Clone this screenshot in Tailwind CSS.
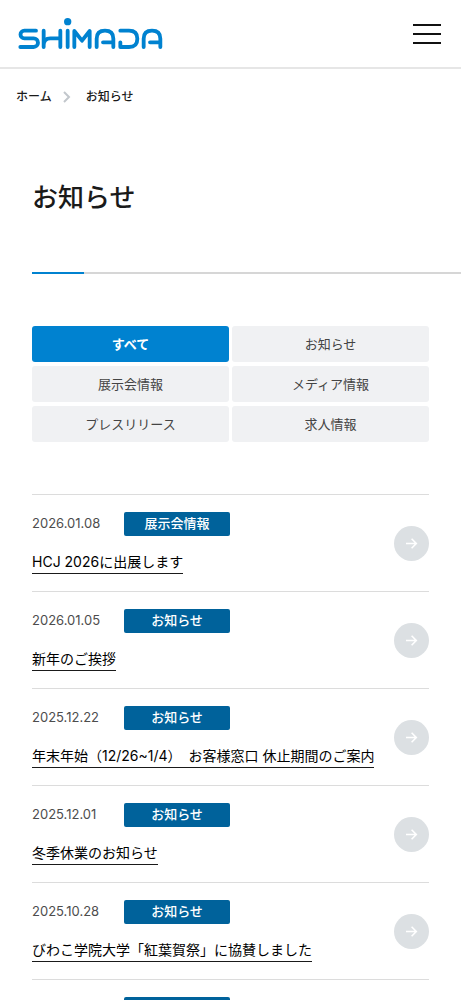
<!DOCTYPE html>
<html lang="ja">
<head>
<meta charset="utf-8">
<meta name="viewport" content="width=device-width, initial-scale=1">
<title>お知らせ | SHIMADA</title>
<script src="https://cdn.jsdelivr.net/npm/@tailwindcss/browser@4"></script>
</head>
<body class="bg-white font-['Inter','Noto_Sans_CJK_JP',sans-serif] font-medium text-[#1a1a1a] overflow-x-hidden">
<header class="flex h-[69px] items-center justify-between border-b-2 border-[#e6e6e6] pl-[18px] pr-5">
  <a href="#" aria-label="SHIMADA">
    <svg class="h-8 w-[145px]" viewBox="54 54 435 96" fill="none" stroke="#0082d0" stroke-width="11.5" stroke-linecap="round" stroke-linejoin="round">
      <path d="M108 92H73a11 11 0 0 0 0 23H101a13 13 0 0 1 0 26H61"/>
      <path d="M131 92V141M131 141V135Q131 115 151 115H181M181 92V141"/>
      <path d="M203 92V141"/><circle cx="203" cy="65" r="11" fill="#0082d0" stroke="none"/>
      <path d="M223 141V93L246 122L269 93V141"/>
      <path d="M290 141V116Q290 92 315 92Q340 92 340 116V141M309 127H340"/>
      <path d="M361 92H387Q412 92 412 116Q412 141 387 141H361V127"/>
      <path d="M431 141V116Q431 92 456 92Q481 92 481 116V141M450 127H481"/>
    </svg>
  </a>
  <button type="button" aria-label="メニュー" class="flex w-7 flex-col gap-[7px]">
    <span class="h-[2px] w-full bg-[#111]"></span><span class="h-[2px] w-full bg-[#111]"></span><span class="h-[2px] w-full bg-[#111]"></span>
  </button>
</header>
<nav aria-label="パンくず" class="flex h-14 items-center gap-[11px] px-4 text-xs">
  <a href="#">ホーム</a>
  <svg class="h-3 w-2" viewBox="0 0 8 12" fill="none" stroke="#c2c7cc" stroke-width="2"><path d="M1 1l5 5-5 5"/></svg>
  <span class="pl-1">お知らせ</span>
</nav>
<main class="pl-8">
  <h1 class="pt-[53px] text-[26px] leading-10">お知らせ</h1>
  <div class="mt-[54px] flex h-[2px]"><span class="w-[52px] bg-[#0082d0]"></span><span class="flex-1 bg-[#d6d6d6]"></span></div>
  <div class="pr-8">
    <div class="mt-[52px] grid grid-cols-2 gap-x-[3px] gap-y-1 text-[13px] font-normal leading-5 text-[#444]">
      <button type="button" class="h-9 rounded-[3px] bg-[#0082d0] font-bold text-white">すべて</button>
      <button type="button" class="h-9 rounded-[3px] bg-[#f0f1f3]">お知らせ</button>
      <button type="button" class="h-9 rounded-[3px] bg-[#f0f1f3]">展示会情報</button>
      <button type="button" class="h-9 rounded-[3px] bg-[#f0f1f3]">メディア情報</button>
      <button type="button" class="h-9 rounded-[3px] bg-[#f0f1f3]">プレスリリース</button>
      <button type="button" class="h-9 rounded-[3px] bg-[#f0f1f3]">求人情報</button>
    </div>
    <ul id="news" class="mt-[52px] border-t border-[#dcdcdc]"></ul>
  </div>
</main>
<template id="row">
  <li class="flex h-[97px] items-center justify-between border-b border-[#dcdcdc]">
    <div>
      <div class="flex h-6 items-center">
        <time class="w-[92px] shrink-0 text-[13px] font-normal text-[#4d4d4d]"></time>
        <span class="tag h-6 w-[106px] rounded-[2px] bg-[#00629b] text-center text-[13px] leading-[22px] text-white"></span>
      </div>
      <div class="mt-[15px] flex h-[23px]">
        <a href="#" class="border-b border-[#1a1a1a] text-sm font-normal leading-[22px] text-black"></a>
      </div>
    </div>
    <svg class="size-[35px] shrink-0" viewBox="0 0 35 35" fill="none"><circle cx="17.5" cy="17.5" r="17.5" fill="#dce0e3"/><path d="M12 17.5h10M17.6 12.8l4.7 4.7-4.7 4.7" stroke="#fff" stroke-width="1.6"/></svg>
  </li>
</template>
<script>
const items = [
  ["2026.01.08","展示会情報","HCJ 2026に出展します"],
  ["2026.01.05","お知らせ","新年のご挨拶"],
  ["2025.12.22","お知らせ","年末年始（12/26~1/4）　お客様窓口 休止期間のご案内"],
  ["2025.12.01","お知らせ","冬季休業のお知らせ"],
  ["2025.10.28","お知らせ","びわこ学院大学「紅葉賀祭」に協賛しました"],
  ["","",""]
];
const tpl = document.getElementById("row"), list = document.getElementById("news");
for (const [date, tag, title] of items) {
  const n = tpl.content.cloneNode(true);
  n.querySelector("time").textContent = date;
  n.querySelector(".tag").textContent = tag;
  n.querySelector("a").textContent = title;
  list.append(n);
}
</script>
</body>
</html>
